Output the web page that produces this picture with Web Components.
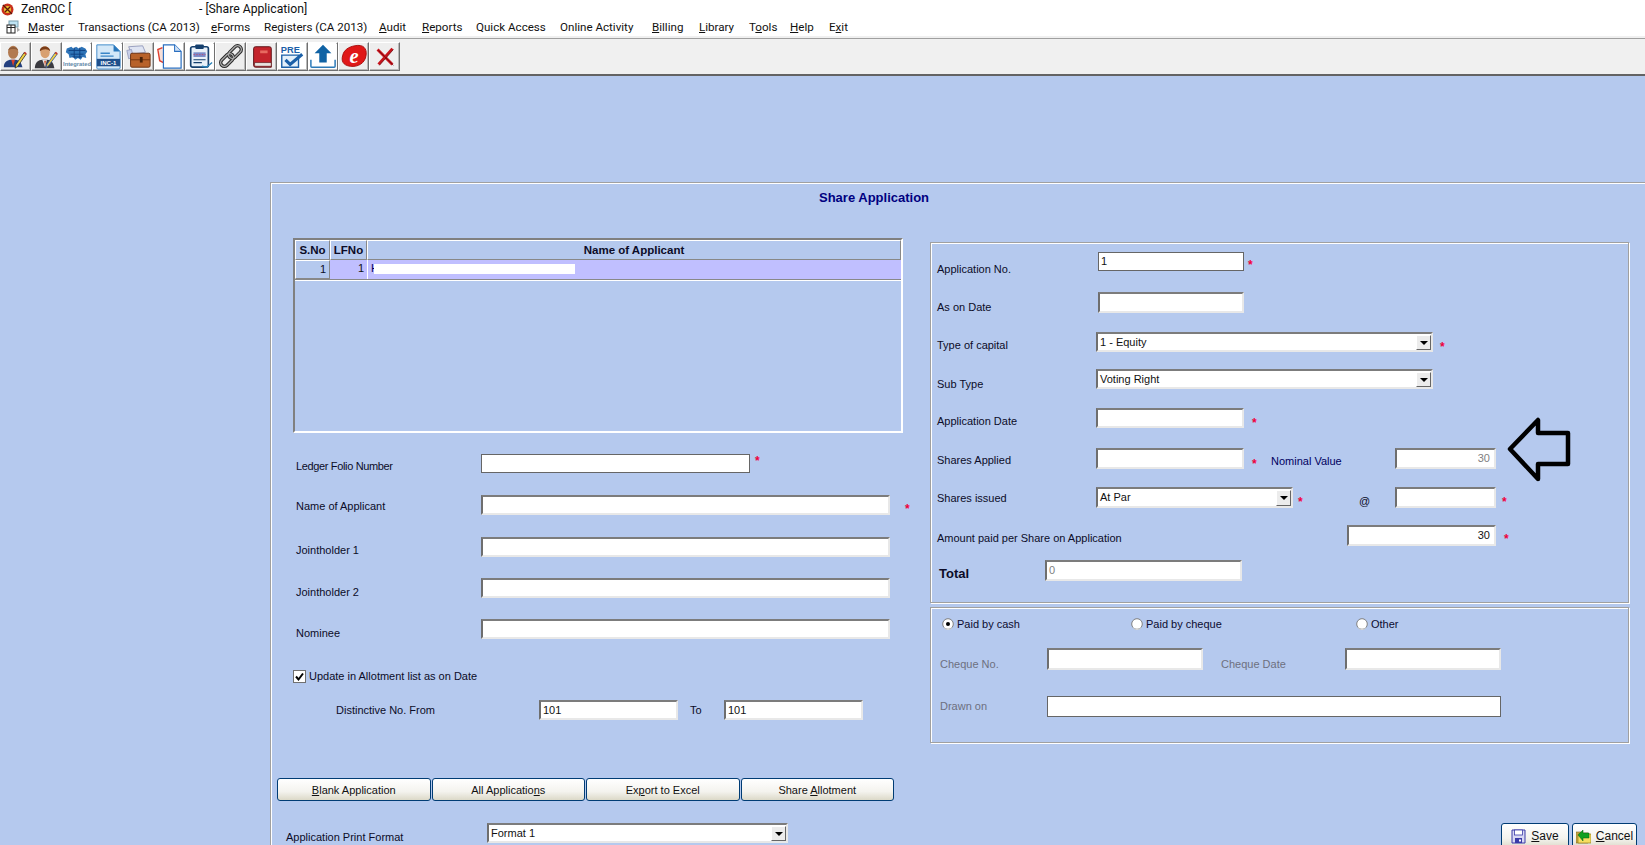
<!DOCTYPE html>
<html lang="en"><head><meta charset="utf-8"><title>ZenROC</title>
<style>html,body{margin:0;padding:0;background:#b5c9ee;overflow:hidden}</style></head>
<body>
<zen-app></zen-app>
<template id="form-tpl">
<style>
:host{display:block;margin:106px 0 0 270px;height:663px;overflow:hidden;border-top:1px solid #a0a0a0;border-left:1px solid #a0a0a0;box-shadow:inset 1px 1px 0 #fff;padding:1px 0 0 1px}
.title{height:28px;line-height:28px;padding-left:547px;font-weight:700;font-size:13px;color:#000080;white-space:nowrap}
.cols{display:flex;align-items:flex-start}
.left{width:658px;flex:none}
.right{width:708px;flex:none;margin-top:30px}
.act{display:flex;justify-content:flex-end;gap:3px;margin:80px 1px 0 0}
</style>
<div class="title">Share Application</div>
<div class="cols">
<div class="left">
 <zen-grid style="margin:26px 0 0 21px"></zen-grid>
 <z-row style="margin-top:21px"><z-text style="margin:5px 0 0 24px;width:185px;letter-spacing:-.35px">Ledger Folio Number</z-text><z-field kind="flat" style="width:269px;height:19px"></z-field><z-star style="margin:3px 0 0 5px"></z-star></z-row>
 <z-row style="margin-top:22px"><z-text style="margin:4px 0 0 24px;width:185px">Name of Applicant</z-text><z-field style="width:409px;height:20px"></z-field><z-star style="margin:10px 0 0 15px"></z-star></z-row>
 <z-row style="margin-top:22px"><z-text style="margin:6px 0 0 24px;width:185px">Jointholder 1</z-text><z-field style="width:409px;height:20px"></z-field></z-row>
 <z-row style="margin-top:21px"><z-text style="margin:7px 0 0 24px;width:185px">Jointholder 2</z-text><z-field style="width:409px;height:20px"></z-field></z-row>
 <z-row style="margin-top:21px"><z-text style="margin:7px 0 0 24px;width:185px">Nominee</z-text><z-field style="width:409px;height:20px"></z-field></z-row>
 <z-row style="margin-top:31px"><z-check style="margin-left:21px">Update in Allotment list as on Date</z-check></z-row>
 <z-row style="margin-top:17px"><z-text style="margin:3px 0 0 64px;width:203px">Distinctive No. From</z-text><z-field value="101" style="width:139px;height:20px"></z-field><z-text style="margin:3px 0 0 12px;width:34px">To</z-text><z-field value="101" style="width:139px;height:20px"></z-field></z-row>
 <z-row style="margin:58px 0 0 5px;gap:1px"><z-button style="width:153.5px"><u>B</u>lank Application</z-button><z-button style="width:153.5px">All Applicatio<u>n</u>s</z-button><z-button style="width:153.5px">Ex<u>p</u>ort to Excel</z-button><z-button style="width:153.5px">Share <u>A</u>llotment</z-button></z-row>
 <z-row style="margin-top:22px"><z-text style="margin:7px 0 0 14px;width:201px">Application Print Format</z-text><z-select value="Format 1" style="width:301px;height:20px"></z-select></z-row>
</div>
<div class="right">
 <z-group style="height:361px">
  <z-row style="margin-top:9px"><z-text style="margin:10px 0 0 6px;width:161px">Application No.</z-text><z-field kind="flat" value="1" style="width:146px;height:19px"></z-field><z-star style="margin:9px 0 0 4px"></z-star></z-row>
  <z-row style="margin-top:21px"><z-text style="margin:8px 0 0 6px;width:161px">As on Date</z-text><z-field style="width:146px;height:21px"></z-field></z-row>
  <z-row style="margin-top:19px"><z-text style="margin:6px 0 0 6px;width:159px">Type of capital</z-text><z-select value="1 - Equity" style="width:337px;height:20px"></z-select><z-star style="margin:11px 0 0 7px"></z-star></z-row>
  <z-row style="margin-top:17px"><z-text style="margin:8px 0 0 6px;width:159px">Sub Type</z-text><z-select value="Voting Right" style="width:337px;height:20px"></z-select></z-row>
  <z-row style="margin-top:19px"><z-text style="margin:6px 0 0 6px;width:159px">Application Date</z-text><z-field style="width:148px;height:20px"></z-field><z-star style="margin:11px 0 0 8px"></z-star></z-row>
  <z-row style="margin-top:20px"><z-text style="margin:5px 0 0 6px;width:159px">Shares Applied</z-text><z-field style="width:148px;height:21px"></z-field><z-star style="margin:12px 0 0 8px;width:7px"></z-star><z-text style="margin:6px 0 0 12px;width:124px;color:#000060">Nominal Value</z-text><z-field value="30" align="right" tone="gray" style="width:101px;height:21px"></z-field></z-row>
  <z-row style="margin-top:18px"><z-text style="margin:4px 0 0 6px;width:159px">Shares issued</z-text><z-select value="At Par" style="width:197px;height:21px"></z-select><z-star style="margin:11px 0 0 5px;width:7px"></z-star><z-text style="margin:7px 0 0 54px;width:36px">@</z-text><z-field style="width:101px;height:21px"></z-field><z-star style="margin:11px 0 0 6px"></z-star></z-row>
  <z-row style="margin-top:17px"><z-text style="margin:6px 0 0 6px;width:410px">Amount paid per Share on Application</z-text><z-field value="30" align="right" style="width:149px;height:21px"></z-field><z-star style="margin:10px 0 0 8px"></z-star></z-row>
  <z-row style="margin-top:14px"><z-text style="margin:7px 0 0 8px;width:106px;font-weight:700;font-size:13px">Total</z-text><z-field value="0" tone="gray" style="width:197px;height:21px"></z-field></z-row>
  <zen-arrow></zen-arrow>
 </z-group>
 <z-group style="height:136px;margin-top:4px">
  <z-row style="margin-top:9px"><z-radio checked style="margin-left:11px;width:189px">Paid by cash</z-radio><z-radio style="width:225px">Paid by cheque</z-radio><z-radio>Other</z-radio></z-row>
  <z-row style="margin-top:17px"><z-text style="margin:9px 0 0 9px;width:107px;color:#6d7080">Cheque No.</z-text><z-field style="width:156px;height:22px"></z-field><z-text style="margin:9px 0 0 18px;width:124px;color:#6d7080">Cheque Date</z-text><z-field style="width:156px;height:22px"></z-field></z-row>
  <z-row style="margin-top:26px"><z-text style="margin:3px 0 0 9px;width:107px;color:#6d7080">Drawn on</z-text><z-field kind="flat" style="width:454px;height:21px"></z-field></z-row>
 </z-group>
 <div class="act">
  <z-button icon="save" style="width:68px;height:26px"><u>S</u>ave</z-button>
  <z-button icon="cancel" style="width:65px;height:26px"><u>C</u>ancel</z-button>
 </div>
</div>
</div>
</template>
<script>
const ICONS=[
`<path d="M3 26c0-6 4-8 8-8h4c3 0 6 2 7 5l1 3z" fill="#24407e"/><path d="M11 18l2 7 2-7z" fill="#d8402c"/><ellipse cx="13" cy="10" rx="5.5" ry="7" fill="#b27a50"/><path d="M7.500 8c1-5 10-5 11 0-3-2-8-2-11 0z" fill="#8c5a38"/><path d="M27 12l-9 13-3 2 1-4 9-13z" fill="#f0d040" stroke="#222" stroke-width=".8"/><path d="M25 10l2 2" stroke="#c03a2a" stroke-width="2"/>`,
`<path d="M3 27c0-6 4-9 8-9h5c3 0 6 2 7 5l1 4z" fill="#3a3a40"/><path d="M11 18l3 8 2-8z" fill="#e8e8e8"/><path d="M13 19l1 6 1-6z" fill="#d05028"/><ellipse cx="14" cy="10" rx="5" ry="6.500" fill="#d8a070"/><path d="M8.500 9c-1-7 11-7 11 0-2-3-8-3-11 0z" fill="#7a3c18"/><path d="M27 12l-9 12-3 3 1-4 9-13z" fill="#f0d040" stroke="#3a5a9a" stroke-width=".9"/><path d="M25 10l2 2" stroke="#c03a2a" stroke-width="2"/>`,
`<rect x="0" y="1" width="30" height="27" fill="#fff"/><path d="M4 6l5-2 2 2 3-2 3 2 3-2 4 2 2 3-2 3 1 4-4-1-2 3-3-2-3 2-2-3-4 1-1-4-3-2z" fill="#2e74b8"/><path d="M6 8h18M8 12h14M10 15h10M12 5v11M18 5v11" stroke="#0e3f80" stroke-width="1"/><text x="15" y="25" font-size="6.200" font-weight="700" text-anchor="middle" fill="#5f88a8" font-family="Liberation Sans">Integrated</text>`,
`<rect x="0" y="1" width="30" height="27" fill="#fff"/><path d="M3 2h18l7 7v18l-1 1H4l-1-1z" fill="#d4e8f8" stroke="#3a86c8"/><path d="M21 2v7h7z" fill="#2a78bc"/><path d="M7 11h10M7 14h14" stroke="#3a86c8" stroke-width="1.400"/><rect x="3" y="17" width="25" height="8" fill="#1d4f8c"/><text x="15.500" y="23.500" font-size="6.500" font-weight="700" text-anchor="middle" fill="#fff" font-family="Liberation Sans">INC-1</text>`,
`<path d="M5 4l15-1 3 7-15 2z" fill="#dfe4f2" stroke="#8088b0" stroke-width=".8"/><path d="M3 8l5-1 2 8-5 2z" fill="#c8cfe8" stroke="#8088b0" stroke-width=".7"/><rect x="7" y="11" width="21" height="15" rx="1.500" fill="#b8622a" stroke="#6a3010"/><path d="M7 18h21" stroke="#7a3a14" stroke-width="1.200"/><rect x="17" y="15" width="3" height="6" fill="#4a2208"/>`,
`<rect x="2" y="1" width="28" height="27" fill="#fff"/><path d="M8 5L3 7l2 12 4 2" fill="#f8e0d8" stroke="#e04030" stroke-width="1.500"/><path d="M9 2h12l7 7v18H9z" fill="#fff" stroke="#2a6fc0" stroke-width="1.300"/><path d="M21 2v7h7" fill="#cfe0f4" stroke="#2a6fc0" stroke-width="1.100"/>`,
`<rect x="0" y="1" width="30" height="27" fill="#fff"/><rect x="5" y="4" width="19" height="22" rx="2" fill="#e8f0f8" stroke="#16406e" stroke-width="1.800"/><rect x="10" y="1.500" width="9" height="5" rx="1" fill="#16406e"/><rect x="8" y="10" width="13" height="5" fill="#7a8ac8"/><path d="M8 12.500h13" stroke="#c04a70" stroke-dasharray="1.500 1.500"/><path d="M8 18h13M8 21h9" stroke="#16406e" stroke-width="1.300"/><path d="M17 25l5 1 6-5" fill="none" stroke="#2a82b8" stroke-width="1.500"/>`,
`<g fill="none" transform="rotate(-45 15 14)"><rect x="1" y="10" width="16" height="8" rx="4" stroke="#2a2a2a" stroke-width="3.600"/><rect x="13" y="10" width="16" height="8" rx="4" stroke="#2a2a2a" stroke-width="3.600"/><rect x="1" y="10" width="16" height="8" rx="4" stroke="#a8a8a8" stroke-width="1.500"/><rect x="13" y="10" width="16" height="8" rx="4" stroke="#a8a8a8" stroke-width="1.500"/></g>`,
`<path d="M6 6q0-2 2-2h15q2 0 2 2v20H8q-2 0-2-2z" fill="#c4242c" stroke="#5a1014"/><path d="M7 21h18v4H8q-1 0-1-2z" fill="#e8e4e0" stroke="#5a1014" stroke-width=".7"/><rect x="13" y="8" width="8" height="3" fill="#e86a60"/>`,
`<rect x="0" y="1" width="30" height="27" fill="#fff"/><text x="3" y="11" font-size="10" font-weight="700" fill="#1c60a8" font-family="Liberation Sans">PRE</text><path d="M4 13h18v13H4z" fill="#e4f0fa" stroke="#1c60a8" stroke-width="1.500"/><path d="M8 18l5 5 13-11" fill="none" stroke="#1c60a8" stroke-width="3.400"/>`,
`<rect x="0" y="1" width="30" height="27" fill="#fff"/><path d="M15 2l9 9h-5v10h-8V11H6z" fill="#0f62a4"/><path d="M2 18v7q0 1 1 1h24q1 0 1-1v-7" fill="none" stroke="#2c7ab8" stroke-width="1.600"/>`,
`<path d="M16 3c9-2 13 3 12 10-1 9-9 13-17 12C3 24 1 19 3 13 4 8 9 4 16 3z" fill="#e01818" stroke="#a80c0c"/><text x="15" y="21" font-size="22" font-weight="700" font-style="italic" text-anchor="middle" fill="#fff" font-family="Liberation Serif">e</text>`,
`<path d="M7 7l16 16M23 6L8 23" stroke="#c8141c" stroke-width="3"/><path d="M7 7l16 16M23 6L8 23" stroke="#6a0a10" stroke-width=".8" transform="translate(1 1)"/>`
];
const whiteBg=[2,3,5,6,9,10];
class Shadow extends HTMLElement{
 constructor(){super();this.attachShadow({mode:'open'});}
 connectedCallback(){if(!this.done){this.done=1;this.shadowRoot.innerHTML=this.html();}}
}
const def=(n,h)=>customElements.define(n,class extends Shadow{html(){return h.call(this)}});
def('zen-app',()=>`<style>:host{display:block;width:1645px;height:845px;overflow:hidden;background:#b5c9ee;font-family:"Liberation Sans",Arial,sans-serif;font-size:11px;color:#0c0c28}</style><zen-title></zen-title><zen-menu></zen-menu><zen-tools></zen-tools><share-form></share-form>`);
def('zen-title',()=>`<style>:host{display:flex;height:18px;background:#fff;align-items:center;font-family:Roboto,sans-serif;font-size:12.200px;color:#111;white-space:nowrap}
svg{margin-left:1px;width:13px;height:13px;flex:none}.a{margin-left:7px;width:178px}</style>
<svg viewBox="0 0 13 13"><circle cx="6.500" cy="6.500" r="6" fill="#c8301c"/><circle cx="6.500" cy="6.500" r="3.500" fill="#e8c030"/><path d="M2 2l9 9M4 9l5-5" stroke="#5a1808" stroke-width="1.300"/></svg>
<span class="a">ZenROC [</span><span>- [Share Application]</span>`);
def('zen-menu',()=>{const items=[['<u>M</u>aster',50],['Transactions (CA 2013)',133],['<u>e</u>Forms',53],['Re<u>g</u>isters (CA 2013)',115],['<u>A</u>udit',43],['<u>R</u>eports',54],['Quick Access',84],['Online Activity',92],['<u>B</u>illing',47],['<u>L</u>ibrary',50],['T<u>o</u>ols',41],['<u>H</u>elp',39],['E<u>x</u>it',30]];
return `<style>:host{display:flex;height:18px;padding-bottom:2px;background:#fff;align-items:center;font-family:Roboto,sans-serif;font-size:11.600px;color:#111;white-space:nowrap;box-shadow:inset 0 -2px 0 #f0f0f0}
svg{margin-left:6px;width:15px;height:14px;flex:none;margin-right:7px}span{display:block;flex:none}u{text-underline-offset:1px}</style>
<svg viewBox="0 0 15 14"><rect x="3" y="1" width="9" height="6" fill="#bfe4f4" stroke="#7aa0b0"/><rect x="1" y="5" width="8" height="8" fill="#fff" stroke="#222"/><path d="M1 7.500h8M5 5v8" stroke="#222"/><path d="M11 7l3 3-3 2" fill="#aaa"/></svg>`+items.map(i=>`<span style="width:${i[1]}px">${i[0]}</span>`).join('')});
def('zen-tools',()=>`<style>:host{display:flex;height:29px;padding:3px 0;background:#f0f0f0;border-top:1px solid #a0a0a0;border-bottom:2px solid #636363;box-sizing:content-box}</style>`+ICONS.map((s,i)=>`<tool-btn data-i="${i}"></tool-btn>`).join(''));
def('tool-btn',function(){const i=+this.dataset.i;return `<style>:host{display:flex;width:30.77px;height:29px;box-sizing:border-box;border:1px solid;border-color:#fff #707070 #707070 #fff;box-shadow:inset -1px -1px 0 #b8b8b8;align-items:center;justify-content:center;background:${whiteBg.includes(i)?'#fff':'#eeeeee'}}svg{width:28px;height:27px;display:block}</style><svg viewBox="0 0 30 29">${ICONS[i]}</svg>`});
customElements.define('share-form',class extends HTMLElement{constructor(){super();this.attachShadow({mode:'open'}).appendChild(document.getElementById('form-tpl').content.cloneNode(true));}});
def('z-row',()=>`<style>:host{display:flex;align-items:flex-start}</style><slot></slot>`);
def('z-text',()=>`<style>:host{display:block;height:0;line-height:14px;white-space:nowrap;flex:none}</style><slot></slot>`);
def('z-star',()=>`<style>:host{display:block;flex:none;font:700 12px/9px "Liberation Sans",sans-serif;color:#f0003c;height:0}</style>*`);
def('z-field',function(){const flat=this.getAttribute('kind')==='flat',r=this.getAttribute('align')==='right',g=this.getAttribute('tone')==='gray';
return `<style>:host{display:block;flex:none;box-sizing:border-box;background:#fff;overflow:hidden;line-height:14px;color:${g?'#808080':'#111'};padding:1px ${r?'4px':'0'} 0 ${r?'0':'2px'};text-align:${r?'right':'left'};${flat?'border:1px solid #666':'border:2px solid;border-color:#7c7c7c #e8e8e8 #e8e8e8 #6e6e6e'}}</style>${this.getAttribute('value')||''}`});
def('z-select',function(){return `<style>:host{display:flex;flex:none;box-sizing:border-box;background:#fff;border:2px solid;border-color:#7c7c7c #e8e8e8 #e8e8e8 #6e6e6e;line-height:16px;color:#111}
.v{flex:1;padding-left:2px;white-space:nowrap;overflow:hidden}.b{width:15px;box-sizing:border-box;border:1px solid;border-color:#fff #666 #666 #fff;background:#ececec;display:flex;align-items:center;justify-content:center;margin:1px 0 0}
.b i{width:0;height:0;border:4px solid transparent;border-top:4px solid #000;border-bottom:0}</style><div class="v">${this.getAttribute('value')}</div><div class="b"><i></i></div>`});
def('z-check',()=>`<style>:host{display:flex;align-items:center;height:13px;line-height:13px;white-space:nowrap;gap:3px}
svg{width:13px;height:13px;flex:none}</style><svg viewBox="0 0 13 13"><rect x=".5" y=".5" width="12" height="12" fill="#fff" stroke="#707070"/><path d="M3 6.500l2.500 3L10 3.500" fill="none" stroke="#000" stroke-width="2"/></svg><slot></slot>`);
def('z-radio',function(){const c=this.hasAttribute('checked');return `<style>:host{display:flex;flex:none;align-items:center;height:14px;line-height:14px;white-space:nowrap;gap:3px;color:#0c0c30}
svg{width:12px;height:12px;flex:none}</style><svg viewBox="0 0 12 12"><circle cx="6" cy="6" r="5.300" fill="#fff" stroke="#808080"/><path d="M2 9.500a5 5 0 0 0 8 0" fill="none" stroke="#ddd"/>${c?'<circle cx="6" cy="6" r="2" fill="#000"/>':''}</svg><slot></slot>`});
def('z-button',function(){const ic=this.getAttribute('icon');const sv={save:`<svg viewBox="0 0 15 15"><path d="M1 1h13v13H1z" fill="#d8d8f4" stroke="#3a3aa8"/><rect x="3.500" y="1" width="8" height="5" fill="#fff" stroke="#3a3aa8" stroke-width=".8"/><rect x="4" y="9" width="7" height="5" fill="#3a3aa8"/><rect x="8" y="10.500" width="2" height="2" fill="#fff"/></svg>`,
cancel:`<svg viewBox="0 0 15 15"><path d="M0 3h5l1 1h6v10H0z" fill="#c8a848" stroke="#7a6420" stroke-width=".6"/><path d="M2 5h13v9H2z" fill="#f6de60" stroke="#98801c" stroke-width=".7"/><path d="M2 6l5-5v3h6v5H7v3z" fill="#10a020" stroke="#06600e" stroke-width=".5"/></svg>`}[ic]||'';
return `<style>:host{display:flex;flex:none;box-sizing:border-box;height:23px;align-items:center;justify-content:center;gap:5px;border:1px solid #003c74;border-radius:3px;background:linear-gradient(#fff,#f4f3ee 60%,#dcd9c8);color:#111;white-space:nowrap;line-height:14px;font-size:${ic?12:11}px}
svg{width:15px;height:15px;flex:none}</style>${sv}<span><slot></slot></span>`});
def('z-group',()=>`<style>:host{display:block;box-sizing:border-box;width:699px;position:relative;border:1px solid #a0a0a0;box-shadow:1px 1px 0 #fff,inset 1px 1px 0 #fff}</style><slot></slot>`);
def('zen-arrow',()=>`<style>:host{display:block;position:absolute;left:575px;top:173px;width:70px;height:66px}svg{display:block}</style><svg width="70" height="66" viewBox="0 0 70 66"><path d="M4 33L32 4V17H62V48H32V63z" fill="none" stroke="#000" stroke-width="4.500" stroke-linejoin="round"/></svg>`);
def('zen-grid',()=>`<style>:host{display:block;box-sizing:border-box;width:610px;height:195px;border:2px solid;border-color:#808080 #fff #fff #808080;background:#b5c9ee}
.g{display:grid;grid-template-columns:35px 37px 1fr;grid-template-rows:20px 19px;border-bottom:1px solid #888;box-shadow:0 1px 0 #fff}
.h{box-sizing:border-box;border:1px solid;border-color:#fff #888 #888 #fff;font-weight:700;font-size:11.500px;text-align:center;line-height:18px;white-space:nowrap}
.c{box-sizing:border-box;line-height:17px;text-align:right;padding-right:3px;position:relative;white-space:nowrap}
.n{border:1px solid;border-color:#fff #888 #888 #fff}.s{background:#c0bfff;color:#111}
.t{text-align:left;padding-left:3px;border-left:1px solid #fff;color:#000060}.m{position:absolute;left:6px;top:4px;width:201px;height:10px;background:#fff}</style>
<div class="g"><div class="h">S.No</div><div class="h">LFNo</div><div class="h">Name of Applicant</div><div class="c n">1</div><div class="c s">1</div><div class="c s t">H<div class="m"></div></div></div>`);
</script>
</body></html>
